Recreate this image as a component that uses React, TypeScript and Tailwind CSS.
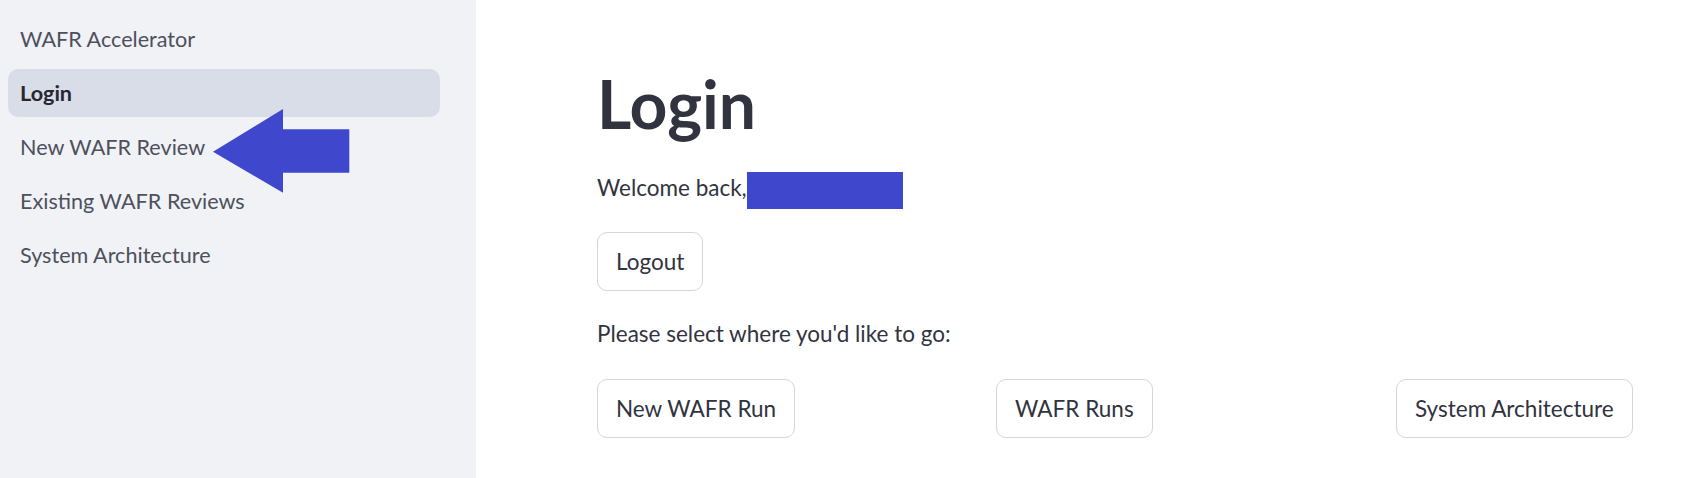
/* ─── Sidebar pages ─── */
const PAGES = [
  { label: "WAFR Accelerator", active: false },
  { label: "Login", active: true },
  { label: "New WAFR Review", active: false },
  { label: "Existing WAFR Reviews", active: false },
  { label: "System Architecture", active: false },
];

const DESTINATIONS = ["New WAFR Run", "WAFR Runs", "System Architecture"];

function NavItem({ label, active }: { label: string; active: boolean }) {
  return (
    <div
      className={`h-[48px] flex items-center px-[12px] rounded-[10px] text-[21.6px] ${
        active ? "bg-[#d9dde7] font-bold text-[#262730]" : "text-[#4e505c]"
      }`}
    >
      {label}
    </div>
  );
}

function Sidebar() {
  return (
    <aside className="relative w-[476px] shrink-0 bg-[#f0f2f6] min-h-[478px]">
      <nav className="w-[432px] ml-[8px] pt-[15px] flex flex-col gap-[6px]">
        {PAGES.map((p) => (
          <NavItem key={p.label} label={p.label} active={p.active} />
        ))}
      </nav>

      {/* annotation arrow drawn over the screenshot */}
      <svg
        className="absolute left-[210px] top-[106px]"
        width="144"
        height="90"
        viewBox="0 0 144 90"
      >
        <polygon
          points="3,45.7 73,3 73,23.3 139.3,23.3 139.3,66.7 73,66.7 73,86.7"
          fill="#3f48cc"
        />
      </svg>
    </aside>
  );
}

function OutlineButton({ label }: { label: string }) {
  return (
    <button
      type="button"
      className="h-[59px] px-[18px] rounded-[10px] border border-[#d6d6d9] bg-white text-[22.5px] text-[#31333f] whitespace-nowrap"
    >
      {label}
    </button>
  );
}

export default function App() {
  return (
    <div
      className="flex min-h-[478px] bg-white"
      style={{ fontFamily: "Lato, 'Noto Sans', sans-serif" }}
    >
      <Sidebar />
      <main className="flex-1 pl-[121px] text-[#31333f]">
        <h1 className="mt-[72px] text-[66px] leading-[64px] font-bold">Login</h1>
        <div className="mt-[36px] flex items-start text-[22.5px]">
          <span className="leading-[31px]">Welcome back,</span>
          <span className="inline-block w-[156px] h-[37px] bg-[#3f48cc]" />
        </div>
        <div className="mt-[23px]">
          <OutlineButton label="Logout" />
        </div>
        <p className="mt-[28px] text-[22.5px] leading-[30px]">
          Please select where you'd like to go:
        </p>
        <div className="mt-[30px] grid grid-cols-[399px_400px_auto]">
          {DESTINATIONS.map((d) => (
            <div key={d}>
              <OutlineButton label={d} />
            </div>
          ))}
        </div>
      </main>
    </div>
  );
}
